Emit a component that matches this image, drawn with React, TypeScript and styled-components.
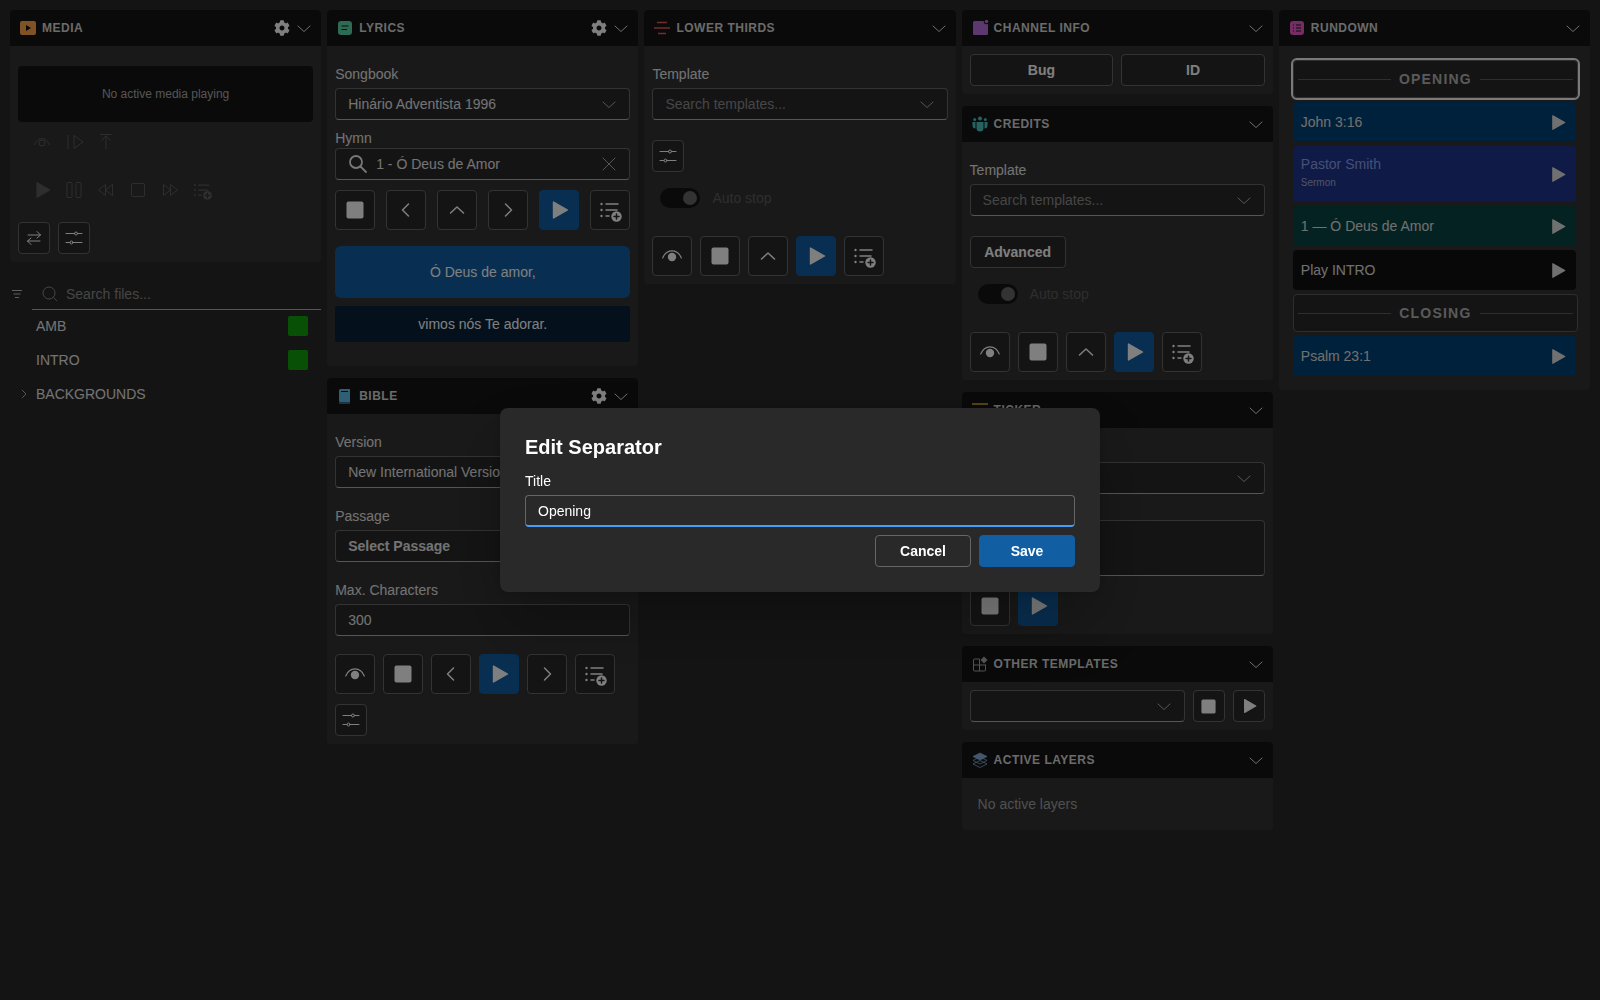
import React from 'react';
import styled, { createGlobalStyle } from 'styled-components';
import { FaCog } from 'react-icons/fa';

const Global = createGlobalStyle`
  html, body { margin: 0; background: #292929; }
  body { font-family: "Liberation Sans", Arial, sans-serif; font-size: 14px; color: #eee; }
  * { box-sizing: border-box; }
`;

const Page = styled.div`
  display: grid;
  grid-template-columns: repeat(5, 1fr);
  gap: 6px;
  padding: 10px;
  min-height: 1000px;
  align-items: start;
`;
const Column = styled.div`display: flex; flex-direction: column; gap: 12px; min-width: 0;`;
const Panel = styled.section`background: #333; border-radius: 4px; overflow: hidden;`;
const Head = styled.header`
  height: 36px; background: #141414; display: flex; align-items: center;
  padding: 0 7px 0 10px; gap: 6px;
`;
const HeadIcon = styled.svg`width: 16px; height: 16px; flex: none; overflow: visible;`;
const HeadTitle = styled.h2`
  flex: 1; margin: 0; font-size: 12px; line-height: 16px; font-weight: 700;
  letter-spacing: 0.5px; color: #d6d6d6; text-transform: uppercase;
`;
const HeadActions = styled.div`display: flex; align-items: center; gap: 2px; color: #fff;`;
const GearWrap = styled.span`display: flex; width: 20px; justify-content: center; color: #fff;`;
const Body = styled.div<{ $top?: number; $bottom?: number }>`
  padding: ${p => p.$top ?? 18}px 8px ${p => p.$bottom ?? 8}px;
  display: flex; flex-direction: column; align-items: stretch;
`;
const Label = styled.label<{ $mt?: number; $mb?: number }>`
  display: block; font-size: 14px; line-height: 20px; color: #e6e6e6;
  margin-top: ${p => p.$mt ?? 0}px; margin-bottom: ${p => p.$mb ?? 4}px;
`;
const Field = styled.div<{ $mt?: number; $h?: number; $grow?: boolean }>`
  height: ${p => p.$h ?? 32}px; margin-top: ${p => p.$mt ?? 0}px;
  background: #292929; border: 1px solid #666; border-bottom-color: #adadad; border-radius: 4px;
  display: flex; align-items: center; padding: 0 10px 0 12px; gap: 8px; color: #e6e6e6;
  ${p => p.$grow ? 'flex: 1;' : ''}
  min-width: 0; position: relative;
`;
const FieldText = styled.span<{ $bold?: boolean; $ph?: boolean }>`
  flex: 1; min-width: 0; white-space: nowrap; overflow: hidden; line-height: 20px;
  font-weight: ${p => p.$bold ? 700 : 400}; color: ${p => p.$ph ? '#8c8c8c' : 'inherit'};
`;
const Row = styled.div<{ $gap?: number; $mt?: number; $between?: boolean }>`
  display: flex; gap: ${p => p.$gap ?? 8}px; margin-top: ${p => p.$mt ?? 0}px;
  ${p => p.$between ? 'justify-content: space-between;' : ''}
`;
const IconBtn = styled.button<{ $size?: number; $primary?: boolean; $ghost?: boolean }>`
  width: ${p => p.$size ?? 40}px; height: ${p => p.$size ?? 40}px; flex: none; padding: 0;
  display: flex; align-items: center; justify-content: center; border-radius: 4px;
  background: ${p => p.$primary ? '#115ea3' : p.$ghost ? 'transparent' : '#292929'};
  border: 1px solid ${p => p.$primary ? '#115ea3' : p.$ghost ? 'transparent' : '#666'};
  color: ${p => p.$ghost ? '#5c5c5c' : '#fff'};
`;
const TextBtn = styled.button<{ $grow?: boolean; $w?: number; $mt?: number }>`
  height: 32px; ${p => p.$grow ? 'flex: 1;' : ''} ${p => p.$w ? `width: ${p.$w}px; align-self: flex-start;` : ''}
  margin-top: ${p => p.$mt ?? 0}px;
  background: #292929; border: 1px solid #666; border-radius: 4px; color: #fff;
  font: 700 14px/20px "Liberation Sans", Arial, sans-serif; padding: 0;
`;
const NowBox = styled.div`
  height: 56px; background: #141414; border-radius: 4px; display: flex;
  align-items: center; justify-content: center; font-size: 12px; color: #ababab;
`;
const GhostBar = styled.div<{ $mt: number }>`display: flex; padding: 0 8px; margin-top: ${p => p.$mt}px;`;
const Toggle = styled.div<{ $mt: number }>`
  display: flex; align-items: center; gap: 12px; padding: 0 8px; height: 20px;
  margin-top: ${p => p.$mt}px; color: #5c5c5c;
`;
const Track = styled.span`
  width: 40px; height: 20px; border-radius: 10px; background: #141414; display: flex;
  align-items: center; justify-content: flex-end; padding-right: 3px;
`;
const Knob = styled.span`width: 14px; height: 14px; border-radius: 50%; background: #666;`;
const Slide = styled.div<{ $h: number; $mt: number; $bg: string; $r: number }>`
  height: ${p => p.$h}px; margin-top: ${p => p.$mt}px; background: ${p => p.$bg};
  border-radius: ${p => p.$r}px; display: flex; align-items: center; justify-content: center; color: #fff;
`;
const Files = styled.div`display: flex; flex-direction: column; margin-top: 16px;`;
const SearchRow = styled.div`display: flex; align-items: center; height: 32px; margin-bottom: -1px;`;
const FilterSlot = styled.span`width: 22px; flex: none; display: flex; color: #bdbdbd; padding-left: 1px;`;
const SearchBox = styled.div`
  flex: 1; height: 32px; border-bottom: 1px solid #adadad; display: flex;
  align-items: center; gap: 8px; padding-left: 10px; color: #8c8c8c;
`;
const FileRow = styled.div`
  height: 34px; display: flex; align-items: center; color: #e6e6e6; padding: 0 13px 0 26px;
  justify-content: space-between; position: relative;
`;
const Caret = styled.svg`position: absolute; left: 8px; top: 11px; width: 12px; height: 12px; color: #adadad;`;
const Dot = styled.span`width: 20px; height: 20px; border-radius: 2px; background: #13a10e;`;
const Rundown = styled.div`
  padding: 14px 12px 14px 14px; display: flex; flex-direction: column; gap: 4px;
`;
const Sep = styled.div<{ $active?: boolean }>`
  height: 38px; background: #292929; border: 1px solid #5c5c5c; border-radius: 4px;
  display: flex; align-items: center; gap: 8px; padding: 0 4px;
  font-size: 14px; font-weight: 700; letter-spacing: 1.2px; color: #b4b4b4; text-transform: uppercase;
  ${p => p.$active ? 'outline: 2px solid #f5f5f5; outline-offset: 0;' : ''}
`;
const SepLine = styled.span`flex: 1; height: 1px; background: #5c5c5c;`;
const Item = styled.div<{ $bg: string; $h?: number; $c?: string }>`
  width: calc(100% - 2px); height: ${p => p.$h ?? 40}px; background: ${p => p.$bg}; border-radius: 4px;
  padding: 0 8px; display: flex; align-items: center; justify-content: space-between;
  color: ${p => p.$c ?? '#e0e0e0'};
`;
const ItemText = styled.div`display: flex; flex-direction: column; gap: 2px; line-height: 20px; margin-bottom: 4px;`;
const ItemSub = styled.span`font-size: 10px; line-height: 14px; color: #a6a9c8;`;
const PlayEnd = styled.span`display: flex; color: #e0e0e0; margin-right: 2px;`;
const Muted = styled.div`padding: 16px; line-height: 20px; color: #a0a0a0;`;

const Scrim = styled.div`
  position: fixed; inset: 0; background: rgba(0,0,0,.5); display: flex;
  align-items: center; justify-content: center;
`;
const Dialog = styled.div`
  width: 600px; background: #292929; border-radius: 8px; padding: 25px;
  box-shadow: 0 0 8px rgba(0,0,0,.2), 0 32px 64px rgba(0,0,0,.24);
  display: flex; flex-direction: column;
`;
const DialogTitle = styled.h1`margin: 0 0 10px; font-size: 20px; line-height: 28px; font-weight: 700; color: #fff;`;
const DialogLabel = styled.label`font-size: 14px; line-height: 20px; color: #fff; margin-bottom: 4px;`;
const DialogInput = styled.input`
  height: 32px; width: 100%; background: #292929; color: #fff; border: 1px solid #666;
  border-bottom: 2px solid #479ef5; border-radius: 4px; padding: 0 12px; outline: none;
  font: 14px "Liberation Sans", Arial, sans-serif;
`;
const DialogActions = styled.div`display: flex; justify-content: flex-end; gap: 8px; margin-top: 8px;`;
const DialogBtn = styled.button<{ $primary?: boolean }>`
  width: 96px; height: 32px; border-radius: 4px; padding: 0;
  font: 700 14px "Liberation Sans", Arial, sans-serif; color: #fff;
  background: ${p => p.$primary ? '#115ea3' : '#292929'};
  border: 1px solid ${p => p.$primary ? '#115ea3' : '#666'};
`;

type IP = { size?: number };
const Chevron = ({ size = 20, dim = false }: IP & { dim?: boolean }) => (
  <svg width={size} height={size} viewBox="0 0 20 20" fill="none" stroke={dim ? '#adadad' : '#e0e0e0'} strokeWidth="1" strokeLinecap="round" strokeLinejoin="round" style={{ flex: 'none' }}>
    <path d="M4 8 10 13.500 16 8" />
  </svg>
);
const Gear = () => <GearWrap><FaCog size={16} /></GearWrap>;
const Stop = ({ size = 18 }: IP) => (
  <svg width={size} height={size} viewBox="0 0 18 18" fill="currentColor"><rect x="0.500" y="0.500" width="17" height="17" rx="2" /></svg>
);
const Play = ({ size = 20 }: IP) => (
  <svg width={size} height={size} viewBox="0 0 20 20" fill="currentColor" stroke="currentColor" strokeWidth="1.400" strokeLinejoin="round"><path d="M4.500 2V18L18.500 10z" /></svg>
);
const Left = () => <svg width="20" height="20" viewBox="0 0 20 20" fill="none" stroke="#fff" strokeWidth="1.500" strokeLinecap="round" strokeLinejoin="round"><path d="M12.500 4 6.500 10l6 6" /></svg>;
const Right = () => <svg width="20" height="20" viewBox="0 0 20 20" fill="none" stroke="#fff" strokeWidth="1.500" strokeLinecap="round" strokeLinejoin="round"><path d="M7.500 4l6 6-6 6" /></svg>;
const Up = () => <svg width="20" height="20" viewBox="0 0 20 20" fill="none" stroke="#fff" strokeWidth="1.500" strokeLinecap="round" strokeLinejoin="round"><path d="M3.500 13l6.500-6 6.500 6" /></svg>;
const Live = () => (
  <svg width="24" height="24" viewBox="0 0 24 24" fill="none" stroke="currentColor" strokeWidth="1.200" strokeLinecap="round">
    <path d="M2.700 14C6.500 4.500 17.500 4.500 21.300 14" /><circle cx="12" cy="13" r="4.200" fill="currentColor" stroke="none" />
  </svg>
);
const Queue = ({ bg = '#292929', size = 24 }: IP & { bg?: string }) => (
  <svg width={size} height={size} viewBox="0 -1.500 24 24" fill="none" stroke="currentColor" strokeWidth="1.500" strokeLinecap="round">
    <circle cx="3.500" cy="4.500" r="1.200" fill="currentColor" stroke="none" />
    <circle cx="3.500" cy="10.500" r="1.200" fill="currentColor" stroke="none" />
    <circle cx="3.500" cy="16.500" r="1.200" fill="currentColor" stroke="none" />
    <path d="M8 4.500H20M8 10.500H19M8 16.500H11" />
    <circle cx="18.500" cy="17" r="5.200" fill="currentColor" stroke="none" />
    <path d="M18.500 14.500V19.500M16 17H21" stroke={bg} />
  </svg>
);
const Tune = () => (
  <svg width="20" height="20" viewBox="0 0 20 20" fill="none" stroke="#fff" strokeWidth="1" strokeLinecap="round">
    <path d="M2 5.500H10.500M13.500 5.500H18M2 14.500H6M9 14.500H18" />
    <circle cx="12" cy="5.500" r="1.500" /><circle cx="7.500" cy="14.500" r="1.500" />
  </svg>
);
const Swap = () => (
  <svg width="20" height="20" viewBox="0 0 20 20" fill="none" stroke="#fff" strokeWidth="1" strokeLinecap="round" strokeLinejoin="round">
    <path d="M4 7H16.500M13 3.500 16.500 7 13 10M16 13H3.500M7 10 3.500 13 7 16.500" />
  </svg>
);
const Eye = () => <svg width="20" height="20" viewBox="0 0 20 20" fill="none" stroke="currentColor" strokeWidth="1"><path d="M2.500 13C6 4.500 14 4.500 17.500 13" /><circle cx="10" cy="11" r="3" /></svg>;
const Next = () => <svg width="20" height="20" viewBox="0 0 20 20" fill="none" stroke="currentColor" strokeWidth="1"><path d="M4 3V17M10 3.500V16.500L19 10z" /></svg>;
const UpLine = () => <svg width="20" height="20" viewBox="0 0 20 20" fill="none" stroke="currentColor" strokeWidth="1"><path d="M4 2.500H15.500M10 17V4M5.500 8.500 10 4 14.500 8.500" /></svg>;
const Pause = () => <svg width="20" height="20" viewBox="0 0 20 20" fill="none" stroke="currentColor" strokeWidth="1"><rect x="3" y="2.500" width="5" height="15" rx="1" /><rect x="12" y="2.500" width="5" height="15" rx="1" /></svg>;
const Rew = () => <svg width="20" height="20" viewBox="0 0 20 20" fill="none" stroke="currentColor" strokeWidth="1"><path d="M9.500 4.500 2.500 10l7 5.500zM16.500 4.500 9.500 10l7 5.500z" /></svg>;
const Ffw = () => <svg width="20" height="20" viewBox="0 0 20 20" fill="none" stroke="currentColor" strokeWidth="1"><path d="M3.500 4.500 10.500 10l-7 5.500zM10.500 4.500 17.500 10l-7 5.500z" /></svg>;
const StopLine = () => <svg width="20" height="20" viewBox="0 0 20 20" fill="none" stroke="currentColor" strokeWidth="1"><rect x="3.500" y="3.500" width="13" height="13" rx="1" /></svg>;

const Select = ({ value, ph, bold, mt, grow }: { value?: string; ph?: boolean; bold?: boolean; mt?: number; grow?: boolean }) => (
  <Field $mt={mt} $grow={grow}>
    <FieldText $ph={ph} $bold={bold}>{value}</FieldText>
    <Chevron dim />
  </Field>
);

const PanelHead = ({ icon, title, gear }: { icon: React.ReactNode; title: string; gear?: boolean }) => (
  <Head>
    <HeadIcon viewBox="0 0 16 16">{icon}</HeadIcon>
    <HeadTitle>{title}</HeadTitle>
    <HeadActions>{gear && <Gear />}<Chevron /></HeadActions>
  </Head>
);

const LiveBtn = () => <IconBtn><Live /></IconBtn>;
const StopBtn = () => <IconBtn><Stop /></IconBtn>;
const UpBtn = () => <IconBtn><Up /></IconBtn>;
const PlayBtn = () => <IconBtn $primary><Play /></IconBtn>;
const QueueBtn = () => <IconBtn><Queue /></IconBtn>;
const AutoStop = ({ mt }: { mt: number }) => <Toggle $mt={mt}><Track><Knob /></Track>Auto stop</Toggle>;
const RowPlay = () => <PlayEnd><Play size={17} /></PlayEnd>;

export default function App() {
  return (
    <>
      <Global />
      <Page>
        <Column>
          <div>
            <Panel>
              <PanelHead gear title="Media" icon={<><rect y="1" width="16" height="14" rx="2" fill="#ffa64d" /><path d="M6 5v6l5-3z" fill="#141414" /></>} />
              <Body $top={20}>
                <NowBox>No active media playing</NowBox>
                <GhostBar $mt={4}>
                  <IconBtn $ghost $size={32}><Eye /></IconBtn>
                  <IconBtn $ghost $size={32}><Next /></IconBtn>
                  <IconBtn $ghost $size={32}><UpLine /></IconBtn>
                </GhostBar>
                <GhostBar $mt={16}>
                  <IconBtn $ghost $size={32}><Play size={18} /></IconBtn>
                  <IconBtn $ghost $size={32}><Pause /></IconBtn>
                  <IconBtn $ghost $size={32}><Rew /></IconBtn>
                  <IconBtn $ghost $size={32}><StopLine /></IconBtn>
                  <IconBtn $ghost $size={32}><Ffw /></IconBtn>
                  <IconBtn $ghost $size={32}><Queue bg="#333" size={20} /></IconBtn>
                </GhostBar>
                <Row $mt={16}>
                  <IconBtn $size={32}><Swap /></IconBtn>
                  <IconBtn $size={32}><Tune /></IconBtn>
                </Row>
              </Body>
            </Panel>
            <Files>
              <SearchRow>
                <FilterSlot>
                  <svg width="12" height="10" viewBox="0 0 12 10" fill="none" stroke="currentColor" strokeWidth="1"><path d="M1 1.500H11M2.500 5H9.500M4 8.500H8" /></svg>
                </FilterSlot>
                <SearchBox>
                  <svg width="16" height="16" viewBox="0 0 16 16" fill="none" stroke="currentColor" strokeWidth="1"><circle cx="7" cy="7" r="6" /><path d="M11.500 11.500 15 15" /></svg>
                  Search files...
                </SearchBox>
              </SearchRow>
              <FileRow>AMB<Dot /></FileRow>
              <FileRow>INTRO<Dot /></FileRow>
              <FileRow>
                <Caret viewBox="0 0 12 12" fill="none" stroke="currentColor" strokeWidth="1"><path d="M4 2l4 4-4 4" /></Caret>
                BACKGROUNDS
              </FileRow>
            </Files>
          </div>
        </Column>

        <Column>
          <Panel>
            <PanelHead gear title="Lyrics" icon={<><rect x="1" y="1" width="14" height="14" rx="3" fill="#5cd6a8" /><path d="M4.500 6H11.500M4.500 9.500H10" stroke="#141414" strokeWidth="1.200" /></>} />
            <Body $bottom={24}>
              <Label>Songbook</Label>
              <Select value="Hinário Adventista 1996" />
              <Label $mt={8} $mb={0}>Hymn</Label>
              <Field>
                <svg width="20" height="20" viewBox="0 0 20 20" fill="none" stroke="#eee" strokeWidth="1.800" strokeLinecap="round" style={{ flex: 'none' }}><circle cx="8" cy="8" r="6" /><path d="M12.500 12.500 18 18" /></svg>
                <FieldText>1 - Ó Deus de Amor</FieldText>
                <svg width="20" height="20" viewBox="0 0 20 20" fill="none" stroke="#adadad" strokeWidth="1" strokeLinecap="round" style={{ flex: 'none' }}><path d="M4 4l12 12M16 4 4 16" /></svg>
              </Field>
              <Row $between $mt={10}>
                <StopBtn /><IconBtn><Left /></IconBtn><UpBtn /><IconBtn><Right /></IconBtn><PlayBtn /><QueueBtn />
              </Row>
              <Slide $h={52} $mt={16} $bg="#115ea3" $r={6}>Ó Deus de amor,</Slide>
              <Slide $h={36} $mt={8} $bg="#082338" $r={2}>vimos nós Te adorar.</Slide>
            </Body>
          </Panel>
          <Panel>
            <PanelHead gear title="Bible" icon={<><path d="M2 2.500A1.500 1.500 0 0 1 3.500 1H13v13H3.500A1.500 1.500 0 0 1 2 12.500z" fill="#5fbfe8" /><path d="M4 3.500H11" stroke="#141414" strokeWidth="1" /><path d="M2 15H13" stroke="#5fbfe8" strokeWidth="1" /></>} />
            <Body>
              <Label>Version</Label>
              <Select value="New International Version" />
              <Label $mt={18}>Passage</Label>
              <Select value="Select Passage" bold />
              <Label $mt={18}>Max. Characters</Label>
              <Field><FieldText>300</FieldText></Field>
              <Row $mt={18}>
                <LiveBtn /><StopBtn /><IconBtn><Left /></IconBtn><PlayBtn /><IconBtn><Right /></IconBtn><QueueBtn />
              </Row>
              <Row $mt={10}><IconBtn $size={32}><Tune /></IconBtn></Row>
            </Body>
          </Panel>
        </Column>

        <Column>
          <Panel>
            <PanelHead title="Lower Thirds" icon={<path d="M3 2.500H13M0 8H16M4 13.500H12" stroke="#e85858" strokeWidth="1.300" />} />
            <Body>
              <Label>Template</Label>
              <Select value="Search templates..." ph />
              <Row $mt={20}><IconBtn $size={32}><Tune /></IconBtn></Row>
              <AutoStop mt={16} />
              <Row $mt={28}><LiveBtn /><StopBtn /><UpBtn /><PlayBtn /><QueueBtn /></Row>
            </Body>
          </Panel>
        </Column>

        <Column>
          <Panel>
            <PanelHead title="Channel Info" icon={<><rect x="1" y="1" width="15" height="14" rx="1.500" fill="#b86ee0" /><circle cx="14.500" cy="1.500" r="2.700" fill="#141414" /><circle cx="14.500" cy="1.500" r="1.800" fill="#b86ee0" /></>} />
            <Body $top={8}>
              <Row><TextBtn $grow>Bug</TextBtn><TextBtn $grow>ID</TextBtn></Row>
            </Body>
          </Panel>
          <Panel>
            <PanelHead title="Credits" icon={<g fill="#4fc4c4"><circle cx="8" cy="2.500" r="2" /><circle cx="2.700" cy="3.500" r="1.500" /><circle cx="13.300" cy="3.500" r="1.500" /><path d="M4.500 6h7v6a3.500 3.500 0 0 1-7 0z" /><path d="M.500 6h3v6.500a3 3 0 0 1-3-3zM12.500 6h3v3.500a3 3 0 0 1-3 3z" /></g>} />
            <Body>
              <Label>Template</Label>
              <Select value="Search templates..." ph />
              <TextBtn $w={96} $mt={20}>Advanced</TextBtn>
              <AutoStop mt={16} />
              <Row $mt={28}><LiveBtn /><StopBtn /><UpBtn /><PlayBtn /><QueueBtn /></Row>
            </Body>
          </Panel>
          <Panel>
            <PanelHead title="Ticker" icon={<path d="M0 2H16M0 8H16M0 14H16" stroke="#e0ae30" strokeWidth="1.300" />} />
            <Body $top={10}>
              <Label>Template</Label>
              <Select value="Search..." ph />
              <Label $mt={2}>Text</Label>
              <Field $h={56} />
              <Row $mt={10}><StopBtn /><PlayBtn /></Row>
            </Body>
          </Panel>
          <Panel>
            <PanelHead title="Other Templates" icon={<><path d="M7.500 3H2.500A1 1 0 0 0 1.500 4v10a1 1 0 0 0 1 1h10a1 1 0 0 0 1-1V8.500M1.500 9H13.500M7.500 3V15" fill="none" stroke="#a8a8a8" strokeWidth="1" /><path d="M12 .500 15.500 4 12 7.500 8.500 4z" fill="#a8a8a8" /></>} />
            <Body $top={8}>
              <Row>
                <Select grow />
                <IconBtn $size={32}><Stop size={15} /></IconBtn>
                <IconBtn $size={32}><Play size={16} /></IconBtn>
              </Row>
            </Body>
          </Panel>
          <Panel>
            <PanelHead title="Active Layers" icon={<g stroke="#86aedb" strokeWidth=".8" strokeLinejoin="round"><path d="M8 8.500 1 12l7 3.500 7-3.500z" fill="none" /><path d="M8 5 1 8.500 8 12l7-3.500z" fill="none" /><path d="M8 1 1 4.500 8 8l7-3.500z" fill="#86aedb" /></g>} />
            <Muted>No active layers</Muted>
          </Panel>
        </Column>

        <Column>
          <Panel>
            <PanelHead title="Rundown" icon={<><rect x="1" y="1" width="14" height="14" rx="3" fill="#e85cc8" /><path d="M4 5H5M7 5H12M4 8H5M7 8H12M4 11H5M7 11H12" stroke="#141414" strokeWidth="1" /></>} />
            <Rundown>
              <Sep $active><SepLine />Opening<SepLine /></Sep>
              <Item $bg="#004377">John 3:16<RowPlay /></Item>
              <Item $bg="#1e348e" $h={56} $c="#8aa0e8">
                <ItemText>Pastor Smith<ItemSub>Sermon</ItemSub></ItemText>
                <RowPlay />
              </Item>
              <Item $bg="#084444">1 — Ó Deus de Amor<RowPlay /></Item>
              <Item $bg="#101010">Play INTRO<RowPlay /></Item>
              <Sep><SepLine />Closing<SepLine /></Sep>
              <Item $bg="#004377">Psalm 23:1<RowPlay /></Item>
            </Rundown>
          </Panel>
        </Column>
      </Page>

      <Scrim>
        <Dialog>
          <DialogTitle>Edit Separator</DialogTitle>
          <DialogLabel>Title</DialogLabel>
          <DialogInput readOnly value="Opening" />
          <DialogActions>
            <DialogBtn>Cancel</DialogBtn>
            <DialogBtn $primary>Save</DialogBtn>
          </DialogActions>
        </Dialog>
      </Scrim>
    </>
  );
}
